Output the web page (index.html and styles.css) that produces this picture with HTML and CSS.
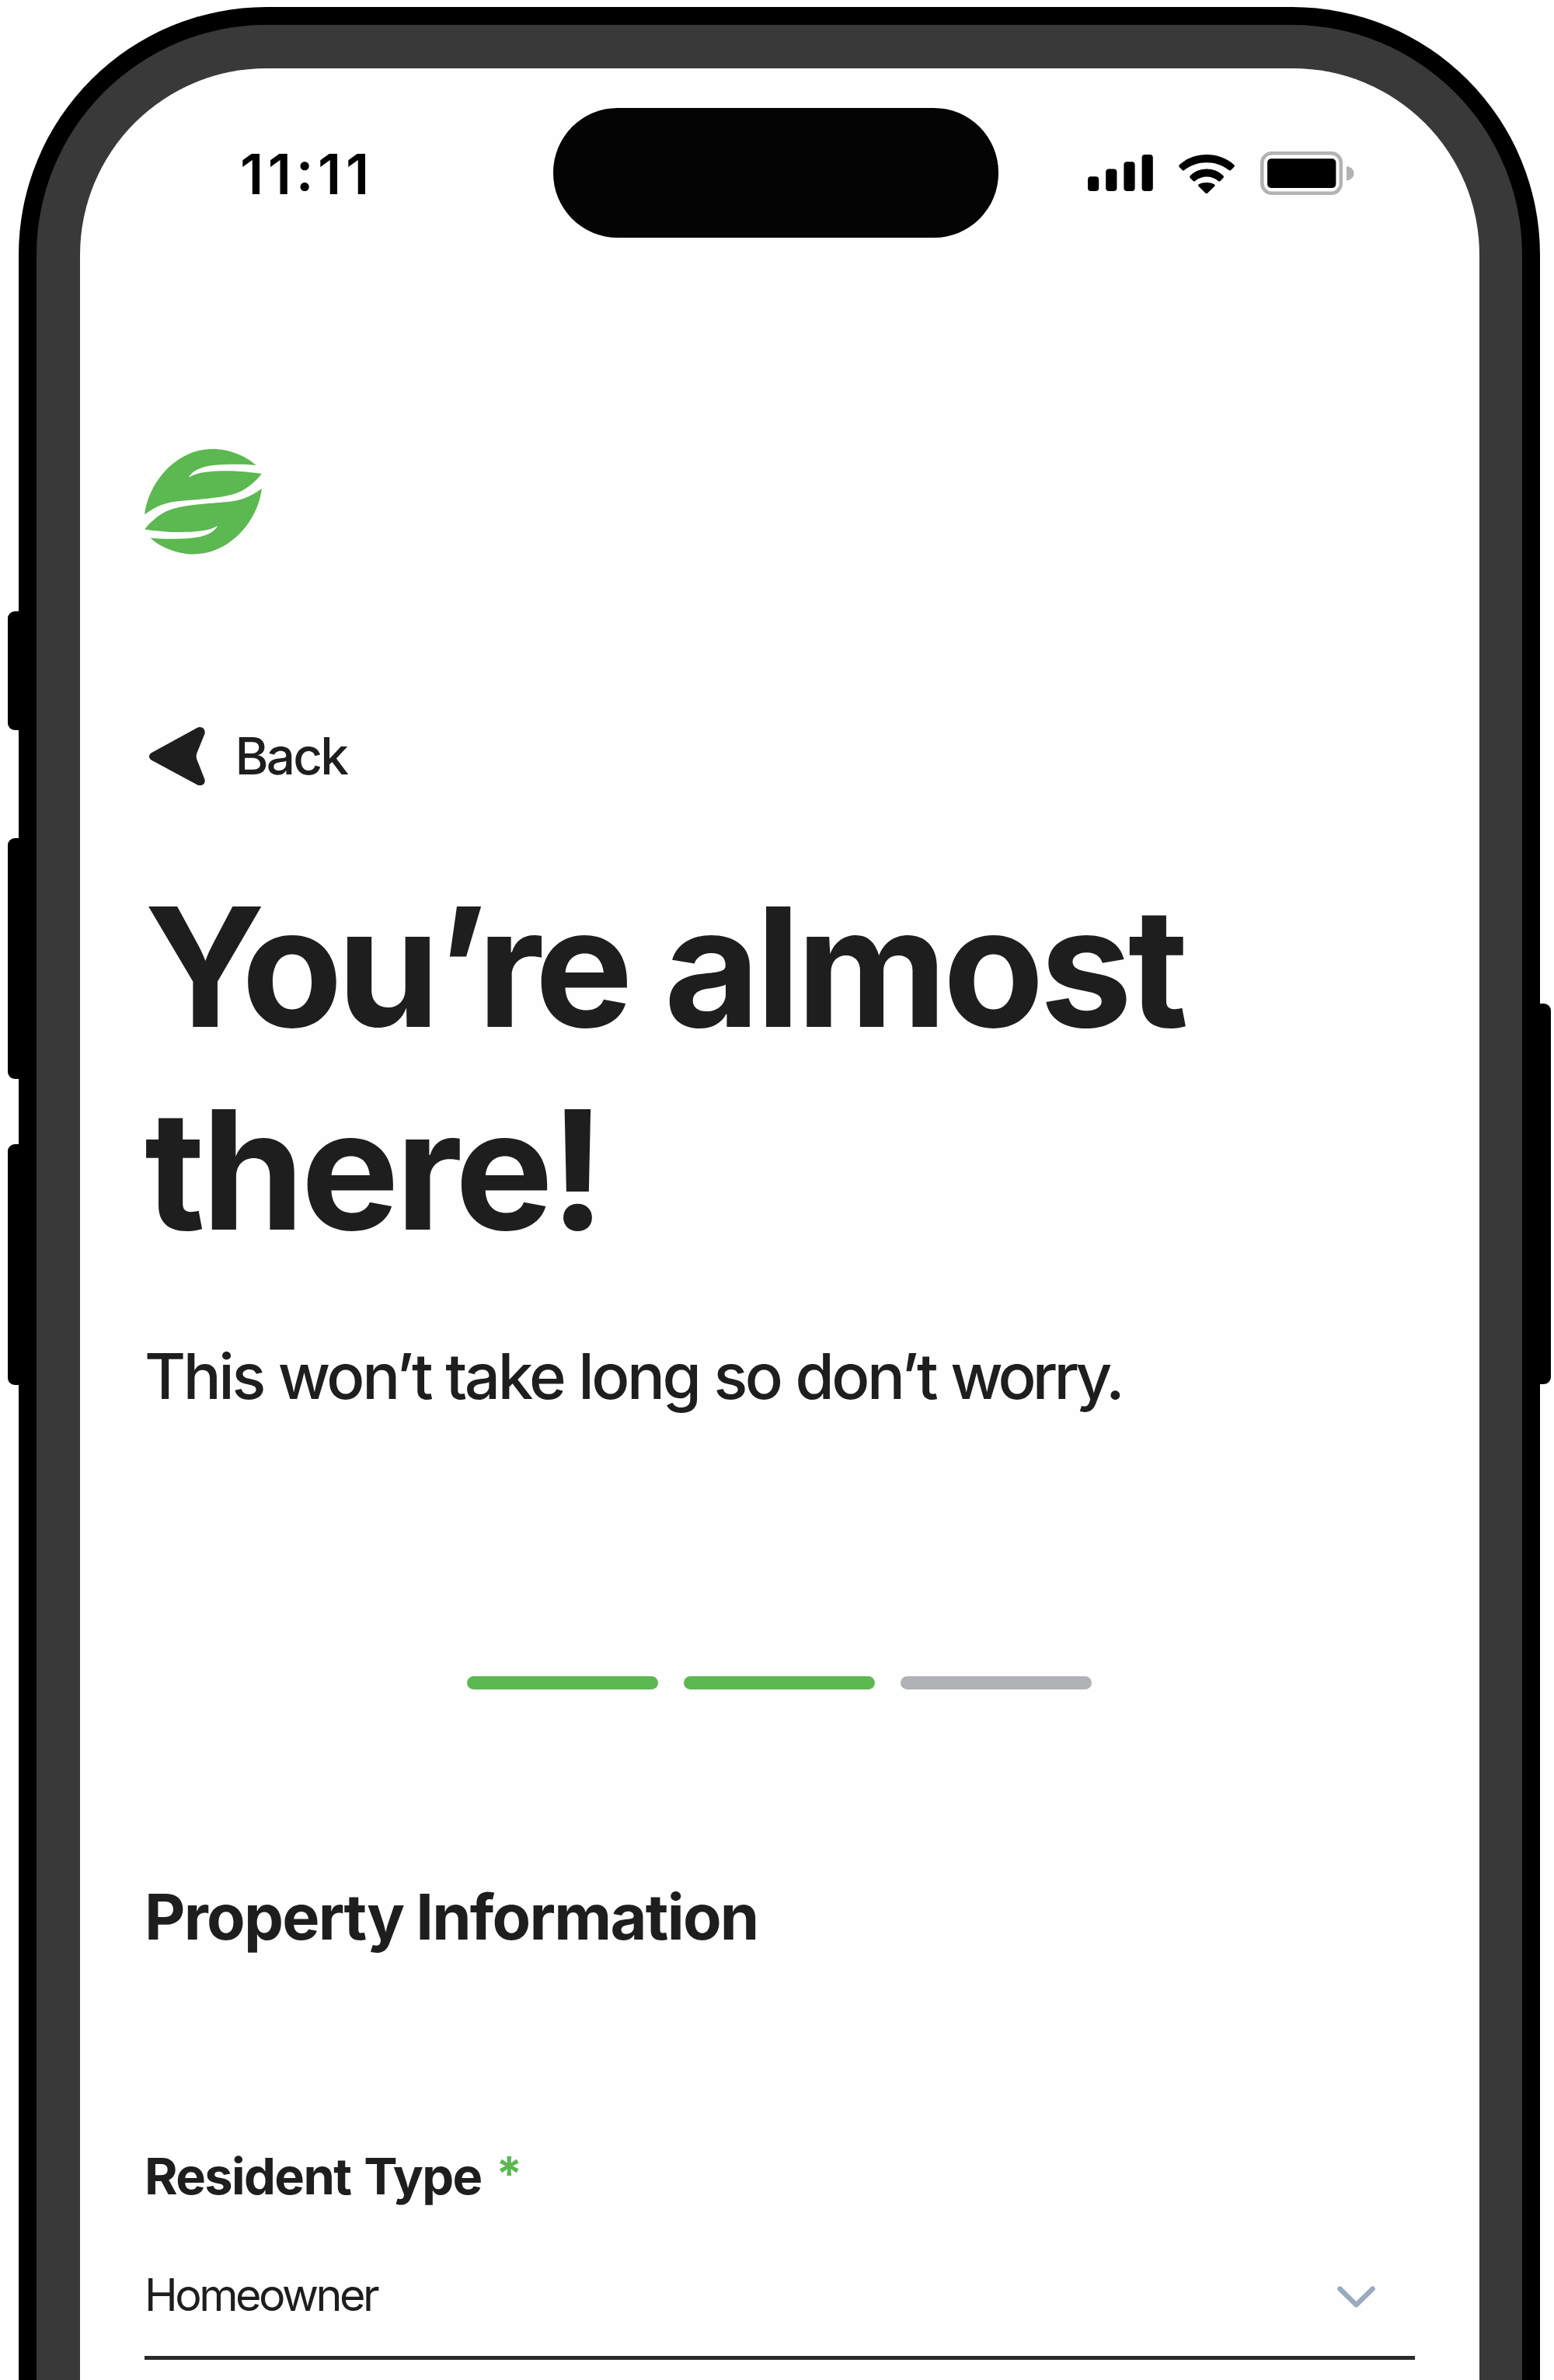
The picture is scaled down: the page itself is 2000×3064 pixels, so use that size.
FILE: index.html
```html
<!DOCTYPE html>
<html lang="en">
<head>
<meta charset="utf-8">
<title>Property Information</title>
<link rel="stylesheet" href="styles.css">
</head>
<body>
<div class="device">
  <span class="key key-action"></span>
  <span class="key key-volume-up"></span>
  <span class="key key-volume-down"></span>
  <span class="key key-power"></span>
  <div class="bezel">
    <main class="screen">
      <header class="status">
        <time class="clock">11<span class="colon">:</span>11</time>
        <div class="island"></div>
        <div class="indicators">
          <svg class="signal" viewBox="0 0 83.8 47">
            <rect x="0" y="28.3" width="14.2" height="18.7" rx="4"/>
            <rect x="23.2" y="18.6" width="14.2" height="28.4" rx="4"/>
            <rect x="46.4" y="9.3" width="14.2" height="37.7" rx="4"/>
            <rect x="69.6" y="0" width="14.2" height="47" rx="4"/>
          </svg>
          <svg class="wifi" viewBox="1517 198.6 72.2 50.6">
            <path d="M1517.8 214.5Q1516.5 213 1518 211.5C1537.5 194.4 1568.5 194.4 1588 211.5Q1589.8 213 1588.2 214.5L1584.2 218.6Q1583 219.8 1581.5 218.6C1565 205.7 1541 205.7 1524.2 218.6Q1523 219.8 1521.6 218.6Z"/>
            <path d="M1531.5 228.5Q1530.5 227 1532 225.5C1543.5 214.2 1562.6 214.2 1574.2 225.5Q1575.7 227 1574.5 228.5L1570.5 232.6Q1569.3 233.8 1567.8 232.6C1559.5 225.2 1546.6 225.2 1538.2 232.6Q1537 233.8 1535.7 232.6Z"/>
            <path d="M1542.5 239.4Q1541.3 237.9 1542.8 236.8C1548.5 233.9 1557 233.9 1562.8 236.8Q1564.3 237.9 1563.2 239.4L1554 248.4Q1552.8 249.4 1551.6 248.4Z"/>
          </svg>
          <svg class="battery" viewBox="0 0 120.6 56">
            <rect class="battery-case" x="2.3" y="2.3" width="101.5" height="51.4" rx="12.5"/>
            <rect x="9.1" y="9.3" width="88.3" height="37.7" rx="5"/>
            <path class="battery-tip" d="M111 18.7C123.8 21.5 123.8 34.9 111 37.7Z"/>
          </svg>
        </div>
      </header>

      <section class="content">
        <svg class="logo" viewBox="78 85 452 406">
          <path id="leaf" d="M78 338C92 215 200 85 340 85C400 85 468 110 508 148C470 143 400 143 350 147C300 151 262 168 248 195C275 178 320 170 390 170C440 170 490 175 530 181C500 218 462 248 420 260C360 277 270 281 215 286C160 291 125 304 78 338Z"/>
          <use href="#leaf" transform="rotate(180 304 288)"/>
        </svg>

        <a class="back">
          <svg class="back-arrow" viewBox="97 107 215 226">
            <path d="M108 205L282 110C298 101 317 115 311 134L281 208Q277 220 281 232L311 308C317 326 298 339 282 330L108 236C93 229 93 212 108 205Z"/>
          </svg>
          <span>Back</span>
        </a>

        <h1 class="title"><span class="tight">You’re</span> almost<br><span class="loose">there!</span></h1>
        <p class="lead">This won’t take long so don’t <span class="tight">worry.</span></p>

        <div class="steps">
          <span class="step step-done"></span>
          <span class="step step-done"></span>
          <span class="step"></span>
        </div>

        <h2 class="section-title">Property Information</h2>

        <div class="label">
          <span>Resident Type</span>
          <span class="required">*</span>
        </div>
        <div class="select">
          <span>Homeowner</span>
          <svg class="chevron" viewBox="0 0 49 28">
            <path d="M3.4 3.6L24.5 24.2L45.6 3.6"/>
          </svg>
        </div>
      </section>
    </main>
  </div>
</div>
</body>
</html>
```
FILE: styles.css
```css
* { box-sizing: border-box; }

body {
  margin: 0;
  background: #fff;
  color: #1e1e1e;
  font-family: Inter, "Liberation Sans", sans-serif;
}

h1, h2, p { margin: 0; }
svg { display: block; flex: none; }

/* Upper part of the phone frame; it runs off the bottom of the page */
.device {
  position: relative;
  width: 1958px;
  height: 3055px;
  margin: 9px 0 0 24px;
  padding: 23px 23px 0;
  border-radius: 319px 319px 0 0;
  background: #000;
}

.bezel {
  height: 100%;
  padding: 56px 55px 0 56px;
  border-radius: 296px 296px 0 0;
  background: #393939;
}

.screen {
  height: 100%;
  padding-top: 51px;
  border-radius: 240px 240px 0 0;
  background: #fefefe;
}

.key {
  position: absolute;
  left: -14px;
  width: 24px;
  border-radius: 9px 0 0 9px;
  background: #000;
}
.key-action { top: 778px; height: 153px; }
.key-volume-up { top: 1070px; height: 310px; }
.key-volume-down { top: 1464px; height: 310px; }
.key-power {
  top: 1283px;
  left: auto;
  right: -14px;
  height: 490px;
  border-radius: 0 9px 9px 0;
}

/* Status bar */
.status {
  display: flex;
  height: 167px;
  padding-left: 206px;
}
.clock {
  width: 403px;
  font-size: 71.5px;
  font-weight: 600;
  line-height: 171px;
  letter-spacing: 5.6px;
  color: #000;
}
.colon {
  line-height: 1;
  vertical-align: 5px;
}
.island {
  width: 573px;
  border-radius: 83px;
  background: #040404;
}
.indicators {
  display: flex;
  align-items: center;
  padding-left: 115px;
}
.signal { width: 83.8px; height: 47px; }
.wifi { width: 72.2px; height: 50.6px; margin: 3px 33px 0; }
.battery { width: 120.6px; height: 56px; }
.battery-case { fill: none; stroke: #b3b3b3; stroke-width: 4.6; }
.battery-tip { fill: #b3b3b3; }

/* Form */
.content {
  display: flex;
  flex-direction: column;
  padding: 272.3px 83px 0;
}
.logo { width: 151px; height: 135.4px; fill: #5cb850; }

.back {
  display: flex;
  align-items: center;
  gap: 38.5px;
  height: 80px;
  margin-top: 219.8px;
  padding-left: 6.3px;
  font-size: 65.6px;
  font-weight: 500;
  letter-spacing: -2.8px;
}
.back-arrow { width: 71.7px; height: 75.3px; fill: #1e1e1e; }

.title {
  margin-top: 102px;
  font-size: 212.6px;
  font-weight: 700;
  line-height: 260.3px;
  letter-spacing: -5.5px;
  word-spacing: 2.5px;
}
.title .tight { letter-spacing: -7.4px; }
.title .loose { letter-spacing: -4.8px; }

.lead {
  margin-top: 85.6px;
  font-size: 81.4px;
  font-weight: 500;
  line-height: 100px;
  letter-spacing: -3.4px;
  word-spacing: 0.5px;
}
.lead .tight { letter-spacing: -4.8px; }

.steps {
  display: flex;
  justify-content: center;
  gap: 33px;
  margin-top: 336px;
  padding-right: 1px;
}
.step {
  width: 246px;
  height: 17px;
  border-radius: 8.5px;
  background: #b1b2b6;
}
.step-done { background: #5cb850; }

.section-title {
  margin-top: 243.6px;
  font-size: 81px;
  font-weight: 700;
  line-height: 100px;
  letter-spacing: -1.75px;
  word-spacing: -1.5px;
}

.label {
  display: flex;
  margin-top: 243.3px;
  font-size: 65px;
  font-weight: 700;
  line-height: 80px;
  letter-spacing: -1.65px;
  word-spacing: 3px;
}
.required {
  margin-left: 18.5px;
  font-size: 61px;
  line-height: 72px;
  color: #5cb850;
}

.select {
  display: flex;
  align-items: center;
  justify-content: space-between;
  margin-top: 72px;
  padding: 0 51px 39px 0;
  border-bottom: 5px solid #2a2a2a;
  font-size: 57.5px;
  line-height: 80px;
  letter-spacing: -3.5px;
}
.chevron {
  width: 49px;
  height: 28px;
  margin-top: 7px;
  fill: none;
  stroke: #9aaabf;
  stroke-width: 6.4;
  stroke-linecap: round;
  stroke-linejoin: round;
}
```
